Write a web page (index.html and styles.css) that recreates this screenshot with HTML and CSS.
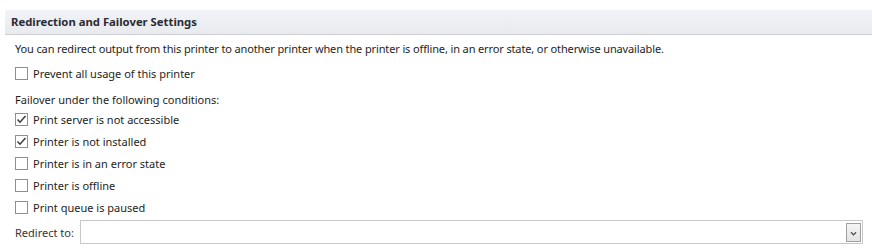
FILE: index.html
```html
<!DOCTYPE html>
<html>
<head>
<meta charset="utf-8">
<link rel="stylesheet" href="styles.css">
</head>
<body>
<div class="panel">
  <div class="header">Redirection and Failover Settings</div>
  <div class="body">
    <p class="desc">You can redirect output from this printer to another printer when the printer is offline, in an error state, or otherwise unavailable.</p>
    <label class="row first"><span class="box"></span><span>Prevent all usage of this printer</span></label>
    <p class="sub">Failover under the following conditions:</p>
    <div class="list">
      <label class="row"><span class="box checked"><svg viewBox="0 0 13 13" width="13" height="13"><path d="M2.5 6.5 L5 9.2 L10.5 3" fill="none" stroke="#3a3a3a" stroke-width="1.5"/></svg></span><span>Print server is not accessible</span></label>
      <label class="row"><span class="box checked"><svg viewBox="0 0 13 13" width="13" height="13"><path d="M2.5 6.5 L5 9.2 L10.5 3" fill="none" stroke="#3a3a3a" stroke-width="1.5"/></svg></span><span>Printer is not installed</span></label>
      <label class="row"><span class="box"></span><span>Printer is in an error state</span></label>
      <label class="row"><span class="box"></span><span>Printer is offline</span></label>
      <label class="row"><span class="box"></span><span>Print queue is paused</span></label>
    </div>
    <div class="redirect">
      <span class="rlabel">Redirect to:</span>
      <div class="select">
        <span class="arrow"><svg viewBox="0 0 15 19" width="15" height="19"><path d="M4.5 8 L7.5 11 L10.5 8" fill="none" stroke="#555" stroke-width="1.4"/></svg></span>
      </div>
    </div>
  </div>
</div>
</body>
</html>
```
FILE: styles.css
```css
html, body {
  margin: 0;
  padding: 0;
  background: #ffffff;
}
body {
  font-family: "Noto Sans", "Open Sans", sans-serif;
  font-size: 11px;
  color: #1e1e1e;
}
.panel {
  padding: 10px 0 0 5px;
}
.header {
  height: 24px;
  line-height: 24px;
  padding-left: 6px;
  font-weight: bold;
  font-size: 11.3px;
  color: #2b2b33;
  background: linear-gradient(#f2f3f6, #e9eaed);
  border-bottom: 1px solid #cfd0d3;
}
.body {
  padding-left: 10px;
}
.desc {
  margin: 6px 0 0 0;
  height: 16px;
  line-height: 16px;
  letter-spacing: -0.13px;
}
.row {
  display: flex;
  align-items: center;
  height: 22px;
  gap: 5px;
}
.row.first {
  margin-top: 5px;
}
.box {
  width: 11px;
  height: 11px;
  border: 1px solid #8f8f8f;
  background: #fff;
  position: relative;
  flex: none;
}
.box svg {
  position: absolute;
  left: -1px;
  top: -1px;
}
.sub {
  margin: 8px 0 0 0;
  height: 16px;
  line-height: 16px;
}
.list {
  margin-top: 0;
}
.redirect {
  display: flex;
  align-items: center;
  gap: 4px;
  margin-top: 2px;
}
.rlabel {
  color: #333;
  width: 61px;
}
.select {
  width: 780px;
  height: 22px;
  border: 1px solid #c8c8c8;
  display: flex;
  justify-content: flex-end;
  align-items: center;
  padding-right: 1px;
}
.arrow {
  width: 15px;
  height: 19px;
  border: 1px solid #a0a0a0;
  box-sizing: border-box;
  background: linear-gradient(#f4f4f4, #e4e4e4);
  display: flex;
}
```
